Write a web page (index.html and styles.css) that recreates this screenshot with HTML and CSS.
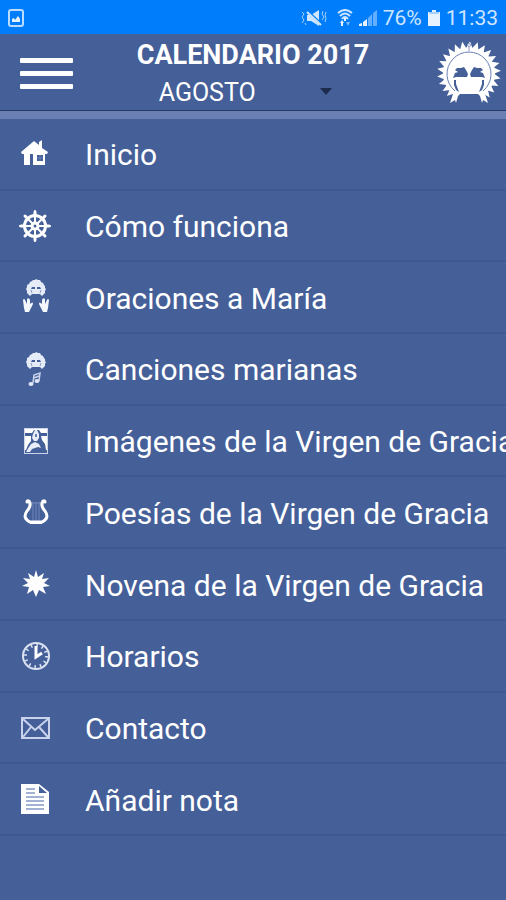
FILE: index.html
```
<!DOCTYPE html>
<html lang="es">
<head>
    <meta charset="utf-8">
    <meta name="viewport" content="width=device-width, initial-scale=1">
    <title>Calendario 2017</title>
    <link rel="stylesheet" href="styles.css">
</head>
<body>
    <!-- shared sun shapes -->
    <svg class="defs" aria-hidden="true">
        <defs>
            <path id="tooth" d="M29 8 L34 -1 L37 8 Z"/>
            <g id="rays">
                <use href="#tooth"/>
                <use href="#tooth" transform="rotate(14 33 31)"/>
                <use href="#tooth" transform="rotate(28 33 31)"/>
                <use href="#tooth" transform="rotate(42 33 31)"/>
                <use href="#tooth" transform="rotate(56 33 31)"/>
                <use href="#tooth" transform="rotate(70 33 31)"/>
                <use href="#tooth" transform="rotate(84 33 31)"/>
                <use href="#tooth" transform="rotate(98 33 31)"/>
                <use href="#tooth" transform="rotate(112 33 31)"/>
                <use href="#tooth" transform="rotate(126 33 31)"/>
                <use href="#tooth" transform="rotate(138 33 31)"/>
                <use href="#tooth" transform="rotate(-14 33 31)"/>
                <use href="#tooth" transform="rotate(-28 33 31)"/>
                <use href="#tooth" transform="rotate(-42 33 31)"/>
                <use href="#tooth" transform="rotate(-56 33 31)"/>
                <use href="#tooth" transform="rotate(-70 33 31)"/>
                <use href="#tooth" transform="rotate(-84 33 31)"/>
                <use href="#tooth" transform="rotate(-98 33 31)"/>
                <use href="#tooth" transform="rotate(-112 33 31)"/>
                <use href="#tooth" transform="rotate(-126 33 31)"/>
                <use href="#tooth" transform="rotate(-138 33 31)"/>
            </g>
            <symbol id="sun" viewBox="0 0 66 64">
                <g fill="#fff">
                    <use href="#rays"/>
                    <path d="M17 52 A26 26 0 1 1 49 52 L52 61 L47 58 L46 61 L44 54 L42 52 H24 L22 54 L20 61 L19 58 L14 61 Z"/>
                </g>
                <path d="M19 49 A22 22 0 1 1 47 49" fill="none" stroke="#6a80b5" stroke-width="1"/>
                <path d="M33 9 V4" stroke="#8b9cc6"/>
                <circle cx="33" cy="3" r="1.5" fill="none" stroke="#8b9cc6"/>
                <g fill="#455f99">
                    <path d="M17 36 L19 31 L22 30 L19 28 L21 26 L25 26 L28 25 L30 28 L32 32 L31 35 L20 35 Z"/>
                    <path d="M49 36 L47 31 L44 30 L47 28 L45 26 L41 26 L38 25 L36 28 L34 32 L35 35 L46 35 Z"/>
                    <path d="M18 38 L20 38 L20 42 L23 50 L20 48 L18 43 Z"/>
                    <path d="M48 38 L46 38 L46 42 L43 50 L46 48 L48 43 Z"/>
                </g>
            </symbol>
            <!-- simpler sun for the menu icons -->
            <symbol id="sun-small" viewBox="0 0 20 19">
                <path d="M4 17 L2 15 L1 14 L1 12 L0 10 L1 8 L1 6 L3 5 L4 3 L6 2 L7 1 L9 1 L10 0 L12 1 L14 1 L15 3 L17 4 L18 6 L19 7 L19 9 L20 10 L19 12 L19 14 L17 16 L16 17 L14 15 H6 Z" fill="#e6ecf7"/>
                <path d="M6 8 H9 V10 H5 Z M14 8 H11 V10 H15 Z" fill="#455f99"/>
                <path d="M5 11 L6 14 M15 11 L14 14" stroke="#8b9cc6"/>
            </symbol>
        </defs>
    </svg>

    <div class="statusbar">
        <svg class="status-picture" viewBox="0 0 16 18">
            <rect x="1" y="1" width="14" height="16" rx="2" fill="none" stroke="#b9dcff" stroke-width="2"/>
            <path d="M4 13 V10 L6 9 L7 11 L10 7 L12 10 V13 Z" fill="#e6f3ff"/>
        </svg>
        <div class="status-right">
            <svg class="status-mute" viewBox="0 0 26 18">
                <path d="M6 6 H10 L18 1 V17 L10 12 H6 Z" fill="#cfe6ff"/>
                <path d="M5 1 L22 17" stroke="#007dfa" stroke-width="3"/>
                <path d="M6 3 L20 16" stroke="#cfe6ff" stroke-width="2"/>
                <path d="M1 3 L3 5 L1 8 L3 11 L1 14 M4 14 L5 16 M22 2 L21 5 L23 8 L21 11 M25 3 L24 6 L25 9 L24 13" fill="none" stroke="#a5d0ff"/>
            </svg>
            <svg class="status-wifi" viewBox="0 0 16 18">
                <path d="M1 4 Q8 -2 15 4 M3 7 Q8 2 13 7 M5 10 Q8 6 11 10" fill="none" stroke="#cfe6ff" stroke-width="2"/>
                <path d="M7 9 H9 V12 H7 Z M3 14 L5 11 L7 14 H6 V17 H4 V14 Z" fill="#e6f3ff"/>
                <path d="M9 13 H13 L11 17 Z" fill="#7fbcff"/>
            </svg>
            <svg class="status-signal" viewBox="0 0 18 18">
                <path d="M0 15 L3 14 V17 H0 Z M4 13 L8 10 V17 H4 Z" fill="#e6f3ff"/>
                <path d="M9 9 L13 5 V17 H9 Z M14 4 L18 1 V17 H14 Z" fill="#63aeff"/>
            </svg>
            <span>76%</span>
            <svg class="status-battery" viewBox="0 0 12 18">
                <path d="M4 1 H8 V3 H12 V17 H0 V3 H4 Z" fill="#e6f3ff"/>
                <path d="M1 3 H11 V5 H1 Z" fill="#a5d0ff"/>
            </svg>
            <span>11:33</span>
        </div>
    </div>

    <header class="header">
        <button class="menu-button" type="button" aria-label="Menú">
            <span></span>
            <span></span>
            <span></span>
        </button>
        <div class="header-center">
            <h1>CALENDARIO 2017</h1>
            <div class="month">
                <select class="month-select" aria-label="Mes">
                    <option>AGOSTO</option>
                </select>
                <svg class="month-arrow" viewBox="0 0 14 8"><path d="M1 0 H13 L7 7 Z" fill="#1d2b4c"/></svg>
            </div>
        </div>
        <svg class="logo"><use href="#sun"/></svg>
    </header>

    <nav class="menu">
        <a href="#">
            <svg class="icon" viewBox="0 0 32 32">
                <path d="M2 14 L15 3 L20 7 V4 L23 2 V10 L29 14 L28 16 H26 V27 H14 V16 H11 V27 H5 V16 H3 Z" fill="#fff"/>
                <path d="M18 17 H24 V23 H18 Z" fill="#455f99"/>
                <path d="M18 20 H24 M21 17 V23" stroke="#6a80b5"/>
            </svg>
            <span>Inicio</span>
        </a>
        <a href="#">
            <svg class="icon" viewBox="0 0 32 32">
                <g fill="none" stroke="#fff" stroke-width="2" stroke-linecap="round">
                    <circle cx="16" cy="16" r="10.5" stroke-width="3"/>
                    <circle cx="16" cy="16" r="3.5"/>
                    <path d="M16 1 V31 M1 16 H31 M6 6 L26 26 M26 6 L6 26"/>
                </g>
                <path d="M16 2 V4 M16 28 V30 M2 16 H4 M28 16 H30 M6 6 L7 7 M25 25 L26 26 M26 6 L25 7 M7 25 L6 26" stroke="#fff" stroke-width="3" stroke-linecap="round"/>
                <circle cx="16" cy="16" r="1.5" fill="#455f99"/>
            </svg>
            <span>Cómo funciona</span>
        </a>
        <a href="#">
            <svg class="icon icon-tall" viewBox="0 0 32 38">
                <use href="#sun-small" x="7" y="1" width="20" height="19"/>
                <path d="M4 22 Q5 20 6 22 L8 26 L8 21 Q10 19 11 22 L11 26 Q14 23 14 26 L11 32 L10 34 H6 L5 30 Z" fill="#f4f7fc"/>
                <path d="M30 22 Q29 20 28 22 L26 26 L26 21 Q24 19 23 22 L23 26 Q20 23 20 26 L23 32 L24 34 H28 L29 30 Z" fill="#f4f7fc"/>
            </svg>
            <span>Oraciones a María</span>
        </a>
        <a href="#">
            <svg class="icon icon-tall" viewBox="0 0 32 38">
                <use href="#sun-small" x="7" y="2" width="20" height="19"/>
                <path d="M14 33 L15 25 L21 23 L20 31 M15 28 L20 26" fill="none" stroke="#c9d4ec" stroke-width="1.5"/>
                <ellipse cx="12" cy="34" rx="2.5" ry="2" fill="#e1e7f5"/>
                <ellipse cx="18" cy="31" rx="2.5" ry="2" fill="#e1e7f5"/>
            </svg>
            <span>Canciones marianas</span>
        </a>
        <a href="#">
            <svg class="icon" viewBox="0 0 32 32">
                <rect x="5.5" y="3.5" width="23" height="25" fill="#455f99" stroke="#cbd5ea"/>
                <path d="M6 4 H28 V8 H22 L20 5 H15 L13 8 H6 Z M6 11 H12 V16 L9 20 L7 25 H6 Z M28 11 H22 L23 15 L26 19 L27 25 H28 Z" fill="#fff"/>
                <path d="M14 9 L16 5 H18 L20 9 L20 13 L18 16 H15 L13 13 Z M12 19 L16 17 L20 19 L22 23 L19 22 L13 24 L11 27 H7 L10 22 Z" fill="#e8edf8"/>
                <path d="M16 9 H18 V12 H16 Z" fill="#6a80b5"/>
            </svg>
            <span>Imágenes de la Virgen de Gracia</span>
        </a>
        <a href="#">
            <svg class="icon" viewBox="0 0 32 32">
                <path d="M14 6 V25 M17 6 V25 M20 6 V25 M11 7 H23" stroke="#7488bb" fill="none"/>
                <path d="M8 6 Q8 4 10 5 Q13 10 8 15 Q3 22 11 26 H23 Q31 22 26 15 Q21 10 24 5 Q26 4 26 6" fill="none" stroke="#fff" stroke-width="3" stroke-linecap="round"/>
                <path d="M11 25 H23 V28 H11 Z" fill="#fff"/>
            </svg>
            <span>Poesías de la Virgen de Gracia</span>
        </a>
        <a href="#">
            <svg class="icon" viewBox="0 0 32 32">
                <path d="M17 2 L19 9 L25 5 L23 11 L30 10 L25 15 L31 18 L24 19 L27 26 L20 22 L17 29 L14 22 L8 26 L10 19 L3 18 L9 15 L4 10 L11 11 L9 5 L15 9 Z" fill="#fff"/>
            </svg>
            <span>Novena de la Virgen de Gracia</span>
        </a>
        <a href="#">
            <svg class="icon" viewBox="0 0 32 32">
                <circle cx="17" cy="16" r="13" fill="none" stroke="#dbe2f2" stroke-width="2"/>
                <circle cx="17" cy="16" r="10.5" fill="none" stroke="#dbe2f2" stroke-width="3" stroke-dasharray="1.5 4"/>
                <path d="M17 6 V17 L23 13" fill="none" stroke="#fff" stroke-width="3"/>
            </svg>
            <span>Horarios</span>
        </a>
        <a href="#">
            <svg class="icon" viewBox="0 0 32 32">
                <path d="M3 7 H30 V27 H3 Z M4 8 L16 19 L29 8 M4 26 L12 16 M29 26 L20 16" fill="none" stroke="#c9d4ec" stroke-width="2"/>
            </svg>
            <span>Contacto</span>
        </a>
        <a href="#">
            <svg class="icon" viewBox="0 0 32 32">
                <path d="M2 1 H20 L30 9 V31 H2 Z" fill="#fff"/>
                <path d="M20 3 V10 H28 Z" fill="#455f99"/>
                <path d="M7 6 H16 M7 10 H16 M7 14 H25 M7 18 H25 M7 22 H25 M7 26 H25" stroke="#a3b1d3" stroke-width="2"/>
            </svg>
            <span>Añadir nota</span>
        </a>
    </nav>
</body>
</html>
```

FILE: styles.css
```
* {
    box-sizing: border-box;
}

body {
    margin: 0;
    min-height: 100vh;
    display: flex;
    flex-direction: column;
    background-color: #455f99;
    color: #fff;
    font-family: Roboto, sans-serif;
    overflow-x: hidden;
}

svg {
    display: block;
    flex-shrink: 0;
}

.defs {
    position: absolute;
    width: 0;
    height: 0;
}

/* status bar */
.statusbar {
    display: flex;
    justify-content: space-between;
    align-items: center;
    height: 34px;
    padding: 2px 8px 0;
    background-color: #007dfa;
    color: #cfe6ff;
    font-size: 21px;
}

.status-right {
    display: flex;
    align-items: center;
    gap: 6px;
}

.status-picture {
    width: 16px;
    height: 18px;
}

.status-mute {
    width: 26px;
    height: 18px;
    margin-right: 4px;
}

.status-wifi {
    width: 16px;
    height: 18px;
}

.status-signal {
    width: 18px;
    height: 18px;
}

.status-battery {
    width: 12px;
    height: 18px;
}

/* header */
.header {
    display: grid;
    grid-template-columns: 1fr auto 1fr;
    align-items: center;
    height: 85px;
    padding: 2px 4px 0;
    border-bottom: 8px solid #6a80b5;
    box-shadow: inset 0 -1px #263a68;
}

.menu-button {
    display: flex;
    flex-direction: column;
    gap: 8px;
    width: 53px;
    margin-left: 16px;
    padding: 0;
    border: none;
    background: none;
    cursor: pointer;
}

.menu-button span {
    height: 5px;
    width: 100%;
    border-radius: 1px;
    background-color: #fff;
}

.header-center h1 {
    margin: 0;
    font-size: 27px;
    line-height: 38px;
    font-weight: 700;
}

.month {
    position: relative;
    padding: 0 22px;
}

.month-select {
    appearance: none;
    display: block;
    width: 100%;
    height: 37px;
    padding: 0;
    border: none;
    background: none;
    color: #fff;
    font-family: inherit;
    font-size: 25px;
}

.month-arrow {
    position: absolute;
    right: 36px;
    top: 14px;
    width: 14px;
    height: 8px;
    pointer-events: none;
}

.logo {
    justify-self: end;
    width: 66px;
    height: 64px;
}

/* menu */
.menu {
    flex: 1;
    display: grid;
    grid-auto-rows: 1fr;
    padding-bottom: 64px;
}

.menu a {
    display: flex;
    align-items: center;
    gap: 34px;
    padding-left: 19px;
    border-bottom: 2px solid #3f5891;
    color: #fff;
    font-size: 30px;
    text-decoration: none;
    white-space: nowrap;
}

.menu a span {
    padding-top: 2px;
}

.icon {
    width: 32px;
    height: 32px;
}

.icon-tall {
    height: 38px;
}
```
